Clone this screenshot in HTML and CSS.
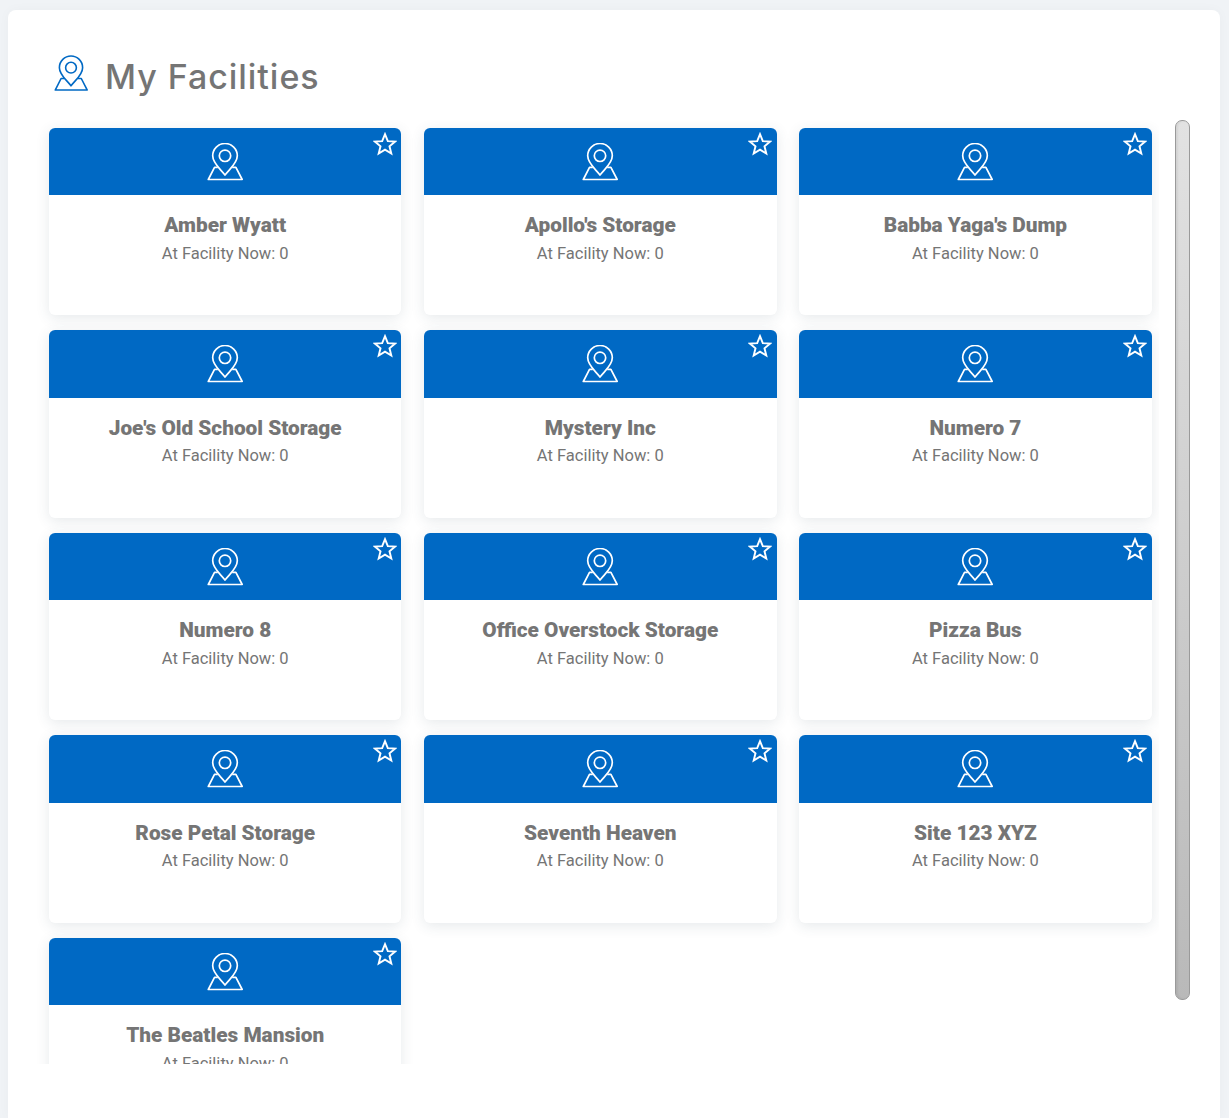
FILE: index.html
```html
<!DOCTYPE html>
<html lang="en">
<head>
<meta charset="utf-8">
<title>My Facilities</title>
<link rel="stylesheet" href="styles.css">
</head>
<body>
<svg class="defs" width="0" height="0" aria-hidden="true">
  <symbol id="pin" viewBox="0 0 36 38">
    <g fill="none" stroke="currentColor" stroke-width="1.7" stroke-linejoin="round">
      <path d="M18 32C13.5 26 5.7 20.5 5.7 12.8a12.3 12.3 0 0 1 24.6 0C30.3 20.5 22.500 26 18 32Z"/>
      <circle cx="18" cy="12.800" r="5.700"/>
      <path d="M10.800 24.300H7.500L1.300 36.500H35.200L28.900 24.300H25.200"/>
    </g>
  </symbol>
  <symbol id="star" viewBox="0 0 24 24">
    <polygon fill="none" stroke="currentColor" stroke-width="1.9" stroke-linejoin="miter" points="12,2.200 14.800,9.100 22.200,9.600 16.500,14.300 18.300,21.500 12,17.600 5.700,21.500 7.500,14.300 1.800,9.600 9.200,9.100"/>
  </symbol>
</svg>
<main class="panel">
  <header class="title-row">
    <svg class="title-icon"><use href="#pin"/></svg>
    <h1>My Facilities</h1>
  </header>
  <div class="body-row">
    <div class="list">
      <div class="grid">
        <article class="card"><div class="card-head"><svg class="head-icon"><use href="#pin"/></svg><svg class="star"><use href="#star"/></svg></div><div class="card-body"><h2>Amber Wyatt</h2><p>At Facility Now: 0</p></div></article>
        <article class="card"><div class="card-head"><svg class="head-icon"><use href="#pin"/></svg><svg class="star"><use href="#star"/></svg></div><div class="card-body"><h2>Apollo's Storage</h2><p>At Facility Now: 0</p></div></article>
        <article class="card"><div class="card-head"><svg class="head-icon"><use href="#pin"/></svg><svg class="star"><use href="#star"/></svg></div><div class="card-body"><h2>Babba Yaga's Dump</h2><p>At Facility Now: 0</p></div></article>
        <article class="card"><div class="card-head"><svg class="head-icon"><use href="#pin"/></svg><svg class="star"><use href="#star"/></svg></div><div class="card-body"><h2>Joe's Old School Storage</h2><p>At Facility Now: 0</p></div></article>
        <article class="card"><div class="card-head"><svg class="head-icon"><use href="#pin"/></svg><svg class="star"><use href="#star"/></svg></div><div class="card-body"><h2>Mystery Inc</h2><p>At Facility Now: 0</p></div></article>
        <article class="card"><div class="card-head"><svg class="head-icon"><use href="#pin"/></svg><svg class="star"><use href="#star"/></svg></div><div class="card-body"><h2>Numero 7</h2><p>At Facility Now: 0</p></div></article>
        <article class="card"><div class="card-head"><svg class="head-icon"><use href="#pin"/></svg><svg class="star"><use href="#star"/></svg></div><div class="card-body"><h2>Numero 8</h2><p>At Facility Now: 0</p></div></article>
        <article class="card"><div class="card-head"><svg class="head-icon"><use href="#pin"/></svg><svg class="star"><use href="#star"/></svg></div><div class="card-body"><h2>Office Overstock Storage</h2><p>At Facility Now: 0</p></div></article>
        <article class="card"><div class="card-head"><svg class="head-icon"><use href="#pin"/></svg><svg class="star"><use href="#star"/></svg></div><div class="card-body"><h2>Pizza Bus</h2><p>At Facility Now: 0</p></div></article>
        <article class="card"><div class="card-head"><svg class="head-icon"><use href="#pin"/></svg><svg class="star"><use href="#star"/></svg></div><div class="card-body"><h2>Rose Petal Storage</h2><p>At Facility Now: 0</p></div></article>
        <article class="card"><div class="card-head"><svg class="head-icon"><use href="#pin"/></svg><svg class="star"><use href="#star"/></svg></div><div class="card-body"><h2>Seventh Heaven</h2><p>At Facility Now: 0</p></div></article>
        <article class="card"><div class="card-head"><svg class="head-icon"><use href="#pin"/></svg><svg class="star"><use href="#star"/></svg></div><div class="card-body"><h2>Site 123 XYZ</h2><p>At Facility Now: 0</p></div></article>
        <article class="card"><div class="card-head"><svg class="head-icon"><use href="#pin"/></svg><svg class="star"><use href="#star"/></svg></div><div class="card-body"><h2>The Beatles Mansion</h2><p>At Facility Now: 0</p></div></article>
      </div>
    </div>
    <div class="scrollbar"><div class="thumb"></div></div>
  </div>
</main>
</body>
</html>
```
FILE: styles.css
```css
* { box-sizing: border-box; }
html, body { height: 100%; }
body {
  margin: 0;
  overflow: hidden;
  background: #f0f3f6;
  color: #757575;
  font-family: Roboto, "Liberation Sans", sans-serif;
}
.defs { position: absolute; }
.panel {
  height: 1108px;
  margin: 10px 9px 0 8px;
  background: #fff;
  border-radius: 8px 8px 0 0;
  box-shadow: 0 0 12px rgba(0, 0, 0, 0.03);
  display: flex;
  flex-direction: column;
}
.title-row {
  height: 110px;
  padding: 45px 0 0 46px;
  display: flex;
  align-items: flex-start;
  flex: none;
}
.title-icon { width: 34px; height: 37px; color: #0069c4; flex: none; }
h1 {
  margin: -3px 0 0 17px;
  font-family: Inter, "Open Sans", sans-serif;
  font-size: 34px;
  letter-spacing: 0.950px;
  line-height: 50px;
  font-weight: 500;
  color: #757575;
}
.body-row { display: flex; height: 944px; flex: none; }
.list {
  width: 1151px;
  overflow: hidden;
  padding: 7.750px 0 0 41px;
  flex: none;
}
.grid {
  width: 1102.600px;
  display: grid;
  grid-template-columns: repeat(3, 1fr);
  column-gap: 22.700px;
  row-gap: 15px;
}
.card {
  height: 187.500px;
  background: #fff;
  border-radius: 6px;
  box-shadow: 0 3px 14px rgba(50, 70, 90, 0.12);
}
.card-head {
  position: relative;
  height: 67.500px;
  background: #0069c4;
  border-radius: 6px 6px 0 0;
  color: #fff;
  display: flex;
  justify-content: center;
  padding-top: 15px;
}
.head-icon { width: 36px; height: 38px; }
.star {
  position: absolute;
  top: 4px;
  right: 4.200px;
  width: 24px;
  height: 24px;
}
.card-body { padding: 17px 10px 0; text-align: center; }
h2 {
  margin: 0;
  font-size: 20.800px;
  line-height: 26px;
  font-weight: 900;
  color: #757575;
}
p {
  margin: 3.700px 0 0;
  font-size: 16.500px;
  line-height: 24px;
  color: #757575;
}
.scrollbar { margin-left: 16px; width: 15px; flex: none; }
.thumb {
  height: 880px;
  border: 1px solid #9a9a9a;
  border-radius: 7px;
  background: linear-gradient(to bottom, #e2e2e2, #b9b9b9);
  box-shadow: inset 2px 0 2px rgba(0, 0, 0, 0.06);
}
```
